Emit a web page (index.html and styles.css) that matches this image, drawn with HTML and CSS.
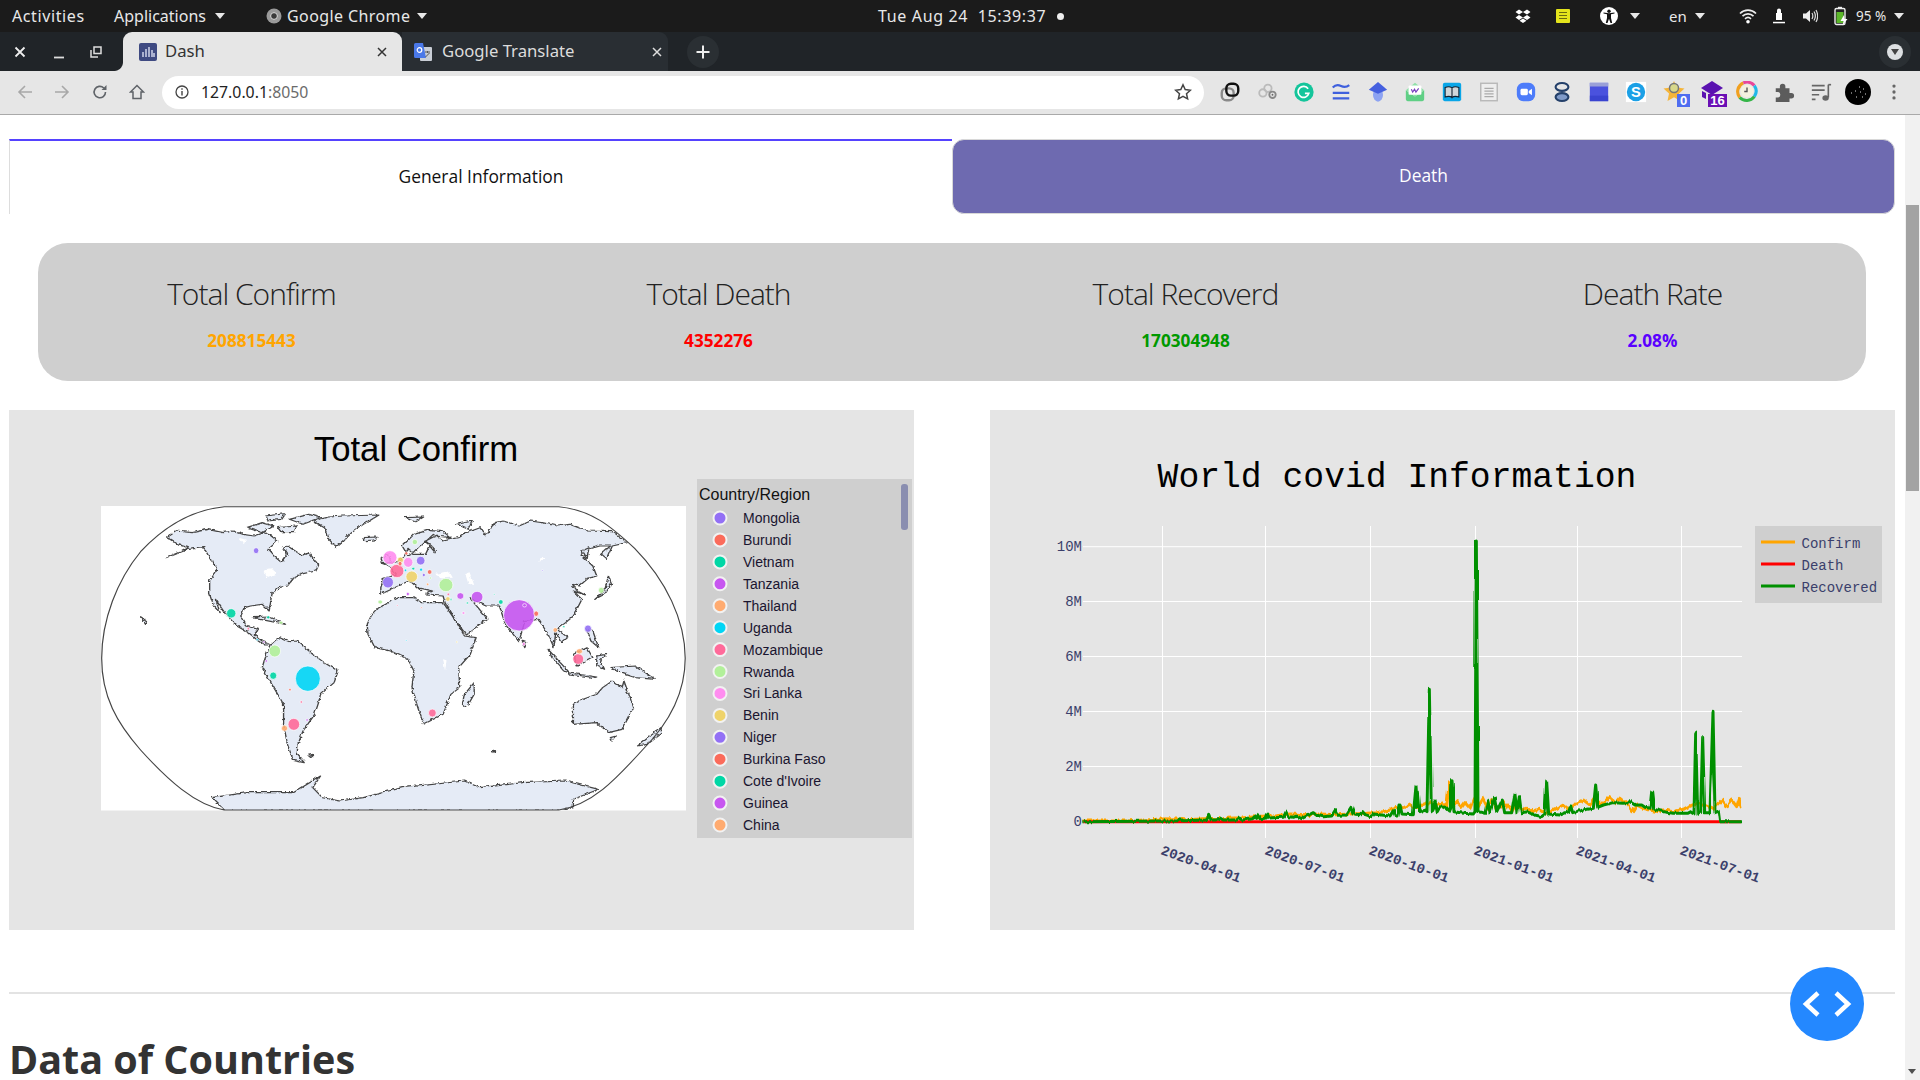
FILE: index.html
```html
<!DOCTYPE html>
<html lang="en">
<head>
<meta charset="utf-8">
<title>Dash</title>
<link rel="stylesheet" href="styles.css">
</head>
<body>
<header class="topbar">
  <div class="top-left">
    <span class="menu m-act">Activities</span>
    <span class="menu m-app">Applications<i class="caret"></i></span>
    <svg class="chrome-logo" viewBox="0 0 16 16"><circle cx="8" cy="8" r="7.5" fill="#9a9a9a"/><circle cx="8" cy="8" r="3.4" fill="#3a3a3a" stroke="#ddd" stroke-width="1"/></svg>
    <span class="menu m-chr">Google Chrome<i class="caret"></i></span>
  </div>
  <div class="clock">Tue Aug 24&nbsp; 15:39:37<i class="rec-dot"></i></div>
  <div class="top-right">
    <svg class="ti w16" viewBox="0 0 16 16"><path fill="#fff" d="M4 1.5 8 4 4 6.5 0.5 4zM12 1.5 15.5 4 12 6.5 8 4zM4 7 8 9.5 4 12 .5 9.500zM12 7l3.500 2.500L12 12 8 9.500zM4.500 12.700 8 10.500l3.500 2.200L8 15z"/></svg>
    <svg class="ti w14 ml25" viewBox="0 0 14 16"><rect y="1" width="14" height="14" rx="1" fill="#e4e41c"/><path d="M3 4.500h8M3 7.500h8M3 10.500h8" stroke="#6a6a10" stroke-width="1"/></svg>
    <svg class="ti w18 ml30" viewBox="0 0 18 18"><circle cx="9" cy="9" r="9" fill="#fff"/><circle cx="9" cy="4.200" r="1.700" fill="#111"/><path d="M3.500 6.500 7 7.300v3.700L5.800 16h1.700L9 11.800 10.500 16h1.700L11 11V7.300l3.500-.8v-1l-5.500.7-5.500-.7z" fill="#111"/></svg>
    <i class="caret ml12"></i>
    <span class="lang ml29">en</span>
    <i class="caret ml6"></i>
    <svg class="ti w18 ml34" viewBox="0 0 18 16"><path d="M1 5.500C5.500 1 12.500 1 17 5.500M3.500 8.200c3-3 8-3 11 0M6 10.800c1.700-1.500 4.300-1.500 6 0" fill="none" stroke="#eee" stroke-width="1.700"/><circle cx="9" cy="13.700" r="1.800" fill="#fff"/></svg>
    <svg class="ti w12 ml16" viewBox="0 0 12 18"><path d="M4 6V3.500a2 2 0 0 1 4 0V6h1v7H3V6z" fill="#fff"/><rect x="0" y="14.800" width="12" height="1.500" fill="#fff"/></svg>
    <svg class="ti w16 ml17" viewBox="0 0 16 16"><path d="M1 5.500h3L8 2v12l-4-3.500H1z" fill="#eee"/><path d="M10 5c1 1.800 1 4.200 0 6M12 3.500c1.700 2.800 1.700 6.200 0 9M14 2c2 3.600 2 8.400 0 12" fill="none" stroke="#ddd" stroke-width="1.200"/></svg>
    <svg class="ti-batt ml16" viewBox="0 0 14 20"><rect x="1" y="2.500" width="10" height="16" rx="1.500" fill="#222" stroke="#eee" stroke-width="1.400"/><rect x="4" y="0.800" width="4" height="2" fill="#eee"/><rect x="2.500" y="6" width="7" height="11" fill="#5cb82a"/><path d="M10 9l-3.500 6h3L8.500 19.500 13.500 13h-3z" fill="#fff"/></svg>
    <span class="batt ml8">95 %</span>
    <i class="caret ml5"></i>
  </div>
</header>

<div class="tabstrip">
  <div class="winctl">
    <svg class="wc" viewBox="0 0 12 12"><path d="M1.500 1.500l9 9M10.500 1.500l-9 9" stroke="#eee" stroke-width="1.800"/></svg>
    <svg class="wc wc-min" viewBox="0 0 12 12"><path d="M1 10.500h10" stroke="#ddd" stroke-width="1.800"/></svg>
    <svg class="wc wc-res" viewBox="0 0 12 12"><path d="M4 1h7v6.500H4zM1 4v7h7" fill="none" stroke="#ddd" stroke-width="1.500"/></svg>
  </div>
  <div class="tab tab-active">
    <svg class="fav" viewBox="0 0 18 18"><rect width="18" height="18" rx="2" fill="#3f4a82"/><path d="M4 14V9M7 14V6M10 14V4M13 14V7M15 14v-4" stroke="#cfd3ea" stroke-width="1.500"/></svg>
    <span class="tab-title">Dash</span>
    <svg class="tabx" viewBox="0 0 10 10"><path d="M1 1l8 8M9 1 1 9" stroke="#333" stroke-width="1.500"/></svg>
  </div>
  <div class="tab tab-idle">
    <svg class="fav" viewBox="0 0 18 18"><rect x="6" y="4" width="12" height="14" rx="1" fill="#c9ced6"/><path d="M0 1.500A1.500 1.500 0 0 1 1.500 0H9l3 15H1.500A1.500 1.500 0 0 1 0 13.500z" fill="#4a78e8"/><circle cx="5.500" cy="7" r="2.300" fill="none" stroke="#fff" stroke-width="1.200"/><path d="M11 9h5M13.500 8v2M11.500 14l4-4" stroke="#555" stroke-width="1"/></svg>
    <span class="tab-title">Google Translate</span>
    <svg class="tabx" viewBox="0 0 10 10"><path d="M1 1l8 8M9 1 1 9" stroke="#ddd" stroke-width="1.500"/></svg>
  </div>
  <div class="newtab">
    <svg viewBox="0 0 14 14"><path d="M7 0.500v13M0.500 7h13" stroke="#eee" stroke-width="2"/></svg>
  </div>
  <div class="profile-drop"><i></i></div>
</div>

<div class="toolbar">
  <svg class="nav nav-a" viewBox="0 0 16 16"><path d="M15 8H2M8 2 2 8l6 6" fill="none" stroke="#a8a8a8" stroke-width="1.600"/></svg>
  <svg class="nav nav-b" viewBox="0 0 16 16"><path d="M1 8h13M8 2l6 6-6 6" fill="none" stroke="#a8a8a8" stroke-width="1.600"/></svg>
  <svg class="nav nav-c" viewBox="0 0 16 16"><path d="M13.500 8a5.700 5.700 0 1 1-1.700-4" fill="none" stroke="#5f6368" stroke-width="1.600"/><path d="M14.500 1v5h-5z" fill="#5f6368"/></svg>
  <svg class="nav nav-d" viewBox="0 0 16 16"><path d="M8 1.500 1.500 8H4v6.500h8V8h2.500z" fill="none" stroke="#5f6368" stroke-width="1.500"/></svg>
  <div class="omnibox">
    <svg class="info" viewBox="0 0 14 14"><circle cx="7" cy="7" r="6" fill="none" stroke="#444" stroke-width="1.300"/><path d="M7 6v4.500M7 3.300v1.500" stroke="#444" stroke-width="1.400"/></svg>
    <span class="url">127.0.0.1<span class="port">:8050</span></span>
    <svg class="star" viewBox="0 0 18 18"><path d="M9 1.800l2.200 4.800 5.200.6-3.900 3.500 1.100 5.200L9 13.300l-4.600 2.600 1.100-5.200L1.600 7.200l5.200-.6z" fill="none" stroke="#444" stroke-width="1.500"/></svg>
  </div>
  <div class="exts">
    <span class="ext"><svg viewBox="0 0 24 24"><rect x="3" y="8" width="13" height="13" rx="5" fill="none" stroke="#8a8a8a" stroke-width="2.600"/><rect x="8" y="3" width="13" height="13" rx="5" fill="none" stroke="#111" stroke-width="2.600"/></svg></span>
    <span class="ext"><svg viewBox="0 0 24 24"><circle cx="7.500" cy="13" r="4" fill="none" stroke="#bbb" stroke-width="2"/><circle cx="13" cy="8" r="4" fill="none" stroke="#bbb" stroke-width="2"/><circle cx="18" cy="15" r="3.500" fill="none" stroke="#888" stroke-width="2"/><circle cx="18" cy="15" r="1" fill="#666"/></svg></span>
    <span class="ext"><svg viewBox="0 0 24 24"><circle cx="12" cy="12" r="10.500" fill="#14c59b"/><path d="M16.500 8.500a6 6 0 1 0 .8 5H13" fill="none" stroke="#fff" stroke-width="1.800"/></svg></span>
    <span class="ext"><svg viewBox="0 0 24 24"><path d="M3 7c3-3 6-3 9-1.500s6 1.500 9-1M3 13h18M3 19h18" fill="none" stroke="#3e5fdd" stroke-width="2.400"/></svg></span>
    <span class="ext"><svg viewBox="0 0 24 24"><ellipse cx="12" cy="15" rx="5.500" ry="7.500" fill="#8da3f2"/><path d="M12 1 22 9.500 12 14 2 9.500z" fill="#4560df"/></svg></span>
    <span class="ext"><svg viewBox="0 0 24 24"><path d="M2 10v10a2 2 0 0 0 2 2h16a2 2 0 0 0 2-2V10l-10 7z" fill="#5fcf85"/><path d="M2 10 12 2l10 8-10 7z" fill="#8fe0a8"/><rect x="5" y="5" width="14" height="10" rx="1" fill="#fff"/><path d="M8 9l1.500 3 2-3 1.500 3 3-4" fill="none" stroke="#7a3fc0" stroke-width="1.300"/></svg></span>
    <span class="ext"><svg viewBox="0 0 24 24"><rect x="2" y="2" width="20" height="20" rx="2" fill="#09a6e8"/><path d="M4.500 7c3-1 5.500-1 7.500.500v10.500c-2-1.500-4.500-1.500-7.500-.5zM19.500 7c-3-1-5.500-1-7.500.500v10.500c2-1.500 4.500-1.500 7.500-.5z" fill="#cfd6da" stroke="#123" stroke-width="1.200"/></svg></span>
    <span class="ext"><svg viewBox="0 0 24 24"><rect x="3" y="2.500" width="18" height="19" fill="#eee" stroke="#b9b9b9" stroke-width="1.600"/><path d="M7 8h10M7 11h10M7 14h10M7 17h10" stroke="#aaa" stroke-width="1.300"/></svg></span>
    <span class="ext"><svg viewBox="0 0 24 24"><rect x="2" y="2" width="20" height="20" rx="7" fill="#4d7cfa"/><rect x="6" y="8.500" width="8" height="7" rx="1.500" fill="#fff"/><path d="M15 11l3.500-2.500v7L15 13z" fill="#fff"/></svg></span>
    <span class="ext"><svg viewBox="0 0 24 24"><ellipse cx="12" cy="6.500" rx="7" ry="4.300" fill="none" stroke="#24406a" stroke-width="2.300"/><ellipse cx="12" cy="17.500" rx="7" ry="4.300" fill="#7f9ac8" stroke="#24406a" stroke-width="2.300"/></svg></span>
    <span class="ext"><svg viewBox="0 0 24 24"><rect x="2" y="2" width="20" height="20" fill="#4a52de"/><rect x="2" y="2" width="20" height="4" fill="#9aa0d8"/><rect x="2" y="16" width="20" height="6" fill="#3a44d0"/></svg></span>
    <span class="ext"><svg viewBox="0 0 24 24"><rect x="1" y="1" width="22" height="22" fill="#fff"/><circle cx="12" cy="12" r="10" fill="#1ba0e6"/><text class="skype-s" x="12" y="17.500" text-anchor="middle">S</text></svg></span>
    <span class="ext"><svg class="badged" viewBox="0 0 28 28"><path d="M11 2l3 6.500 7.500.9-5.500 5 1.500 7.500L11 18.200 4.500 22 6 14.400.5 9.400 8 8.500z" fill="#f5b53a"/><circle cx="11" cy="9" r="4.500" fill="#d8d88a" stroke="#777" stroke-width="1.500"/><rect x="14" y="15" width="13" height="13" fill="#4f6df0"/><text class="badge" x="20.500" y="26" text-anchor="middle">0</text></svg></span>
    <span class="ext"><svg class="badged" viewBox="0 0 28 28"><path d="M12 2 23 9 12 16 1 9z" fill="#5a12b0"/><path d="M2 12l4 2v6l-4-2z" fill="#5a12b0"/><rect x="8" y="15" width="19" height="13" fill="#6a0fb5"/><text class="badge" x="17.500" y="26" text-anchor="middle">16</text></svg></span>
    <span class="ext"><svg viewBox="0 0 24 24"><path d="M8 2A10.500 10.500 0 0 0 4 18" fill="none" stroke="#f0a020" stroke-width="3.400"/><path d="M8 2A10.500 10.500 0 0 1 20 5" fill="none" stroke="#e8479a" stroke-width="3.400"/><path d="M20 5a10.500 10.500 0 0 1 0 12" fill="none" stroke="#20b8e8" stroke-width="3.400"/><path d="M20 17a10.500 10.500 0 0 1-16 1" fill="none" stroke="#35b548" stroke-width="3.400"/><circle cx="12" cy="11" r="7" fill="#f4f1df"/><path d="M12 7v4.500H9" fill="none" stroke="#555" stroke-width="1.500"/></svg></span>
    <span class="ext"><svg viewBox="0 0 24 24"><path d="M3 8h4.500V6a3 3 0 0 1 6 0v2H18v5h2a3 3 0 0 1 0 6h-2v4H3v-5h2a3 3 0 0 0 0-6H3z" fill="#5c5c5c"/></svg></span>
    <span class="ext"><svg viewBox="0 0 24 24"><path d="M2 5h14M2 10h14M2 15h8M2 20h4" stroke="#666" stroke-width="1.800"/><path d="M20 4v14" stroke="#666" stroke-width="1.800"/><ellipse cx="17" cy="18.500" rx="3.500" ry="3" fill="#666"/><path d="M20 4h3" stroke="#666" stroke-width="1.800"/></svg></span>
    <span class="ext"><svg class="avatar" viewBox="0 0 26 26"><circle cx="13" cy="13" r="13" fill="#000"/><path d="M6 14h1M10 12h1M14 8h1M15 13h1M18 10h1M20 15h1M11 18h1M17 18h1" stroke="#ddd" stroke-width="1"/></svg></span>
    <span class="ext"><svg viewBox="0 0 24 24"><circle cx="12" cy="5.500" r="1.800" fill="#666"/><circle cx="12" cy="12" r="1.800" fill="#666"/><circle cx="12" cy="18.500" r="1.800" fill="#666"/></svg></span>
  </div>
</div>

<div class="viewport">
  <main class="page">
    <nav class="tabs">
      <div class="dash-tab dash-tab-on">General Information</div>
      <div class="dash-tab dash-tab-off">Death</div>
    </nav>

    <section class="stats">
      <div class="stat"><h2 class="stat-name">Total Confirm</h2><p class="stat-num n-confirm">208815443</p></div>
      <div class="stat"><h2 class="stat-name">Total Death</h2><p class="stat-num n-death">4352276</p></div>
      <div class="stat"><h2 class="stat-name">Total Recoverd</h2><p class="stat-num n-rec">170304948</p></div>
      <div class="stat"><h2 class="stat-name">Death Rate</h2><p class="stat-num n-rate">2.08%</p></div>
    </section>

    <section class="graphs">
      <div class="panel">
        <svg class="plot" viewBox="9 410 905 520">
          <defs>
            <filter id="coast" x="0" y="0" width="100%" height="100%" filterUnits="objectBoundingBox" color-interpolation-filters="sRGB">
              <feTurbulence type="turbulence" baseFrequency=".07" numOctaves="2" seed="7" result="n"/>
              <feDisplacementMap in="SourceGraphic" in2="n" scale="9" xChannelSelector="R" yChannelSelector="G"/>
            </filter>
            <filter id="wiggle" x="-2%" y="-2%" width="104%" height="104%" color-interpolation-filters="sRGB">
              <feTurbulence type="fractalNoise" baseFrequency=".09 .01" numOctaves="2" seed="3" result="n"/>
              <feDisplacementMap in="SourceGraphic" in2="n" scale="16" xChannelSelector="A" yChannelSelector="R"/>
            </filter>
            <filter id="jitter" x="-2%" y="-2%" width="104%" height="104%" color-interpolation-filters="sRGB">
              <feTurbulence type="fractalNoise" baseFrequency=".14 .004" numOctaves="2" seed="11" result="n"/>
              <feDisplacementMap in="SourceGraphic" in2="n" scale="9" xChannelSelector="A" yChannelSelector="R"/>
            </filter>
          </defs>
          <text class="map-title" x="416" y="461" text-anchor="middle">Total Confirm</text>
          <rect x="101" y="506" width="585" height="304.500" fill="#fff"/>
          <g transform="translate(90 490) scale(.38903 .33333)">
            <g class="land" filter="url(#coast)">
              <path d="M195,200 L232,182 250,170 222,160 195,140 220,120 260,125 300,115 340,125 365,120 390,130 420,135 445,125 460,132 480,150 455,175 470,195 490,215 505,190 495,172 505,165 545,195 560,185 585,222 578,240 545,248 520,262 505,285 485,290 465,310 458,360 440,340 410,345 395,350 385,375 400,405 430,415 420,430 440,450 462,462 445,462 430,450 405,425 375,405 345,368 320,325 332,365 315,345 305,310 305,270 325,235 305,200 290,170 250,175Z"/>
              <path d="M570,90 L610,78 650,75 740,72 715,90 700,100 670,125 650,150 630,170 612,145 605,120 600,110Z"/>
              <path d="M445,510 L460,465 485,440 510,452 530,450 570,490 600,515 635,540 625,575 590,610 585,635 575,670 545,720 532,760 530,790 548,815 520,808 505,760 495,700 495,640 470,590 440,530Z"/>
              <path d="M710,400 L720,375 740,350 790,320 830,320 850,335 870,335 905,335 920,360 935,385 960,435 990,440 975,490 945,530 948,590 925,610 905,670 855,700 840,650 825,590 830,540 815,505 770,480 730,470 712,430Z"/>
              <path d="M745,290 L752,262 785,252 772,232 752,218 790,215 805,195 815,175 830,190 860,190 870,165 885,185 880,170 860,150 885,135 925,140 905,122 865,118 830,130 800,165 815,195 830,185 880,130 905,150 945,140 965,125 1000,110 1015,135 1040,95 1060,90 1100,105 1130,90 1160,95 1200,105 1230,100 1275,120 1340,122 1378,155 1340,165 1325,205 1310,190 1335,165 1308,165 1268,178 1262,195 1290,225 1300,255 1278,262 1255,285 1238,280 1250,300 1270,312 1240,300 1262,325 1240,375 1220,395 1198,415 1225,440 1210,455 1195,425 1190,470 1175,430 1150,385 1115,392 1100,452 1065,400 1050,345 1015,345 975,322 1020,385 965,432 935,385 910,335 905,315 860,312 878,300 840,290 850,300 820,270 790,285 745,310Z"/>
              <path d="M1240,640 L1265,625 1300,610 1315,590 1340,570 1365,590 1370,570 1395,650 1365,715 1330,725 1300,695 1240,700Z"/>
              <path d="M1335,530 L1400,525 1450,565 1400,560 1360,545Z"/>
              <path d="M1240,490 L1275,470 1290,500 1250,525Z"/>
              <path d="M1175,475 L1230,545 1215,540 1185,500Z"/>
              <path d="M1225,545 L1300,558 1290,562 1230,552Z"/>
              <path d="M1300,495 L1325,490 1310,510 1320,535 1300,525Z"/>
              <path d="M1275,420 L1290,420 1305,470 1285,450Z"/>
              <path d="M1295,325 L1320,300 1330,255 1338,280 1320,310Z"/>
              <path d="M1262,180 L1280,170 1275,205Z"/>
              <path d="M960,610 L985,575 985,610 965,650 955,640Z"/>
              <path d="M1405,765 L1465,710 1470,725 1430,760Z"/>
              <path d="M1335,740 L1350,735 1340,750Z"/>
              <path d="M745,205 L765,190 770,215 750,218Z"/>
              <path d="M700,140 L735,138 730,150 705,152Z"/>
              <path d="M415,380 L460,378 500,400 465,392Z"/>
              <path d="M1108,450 L1120,455 1115,470Z"/>
              <path d="M310,920 L400,905 520,905 590,855 570,890 595,920 640,930 700,920 800,890 960,870 1000,890 1110,875 1220,870 1305,895 1240,925 1240,950 1205,960 H345Z"/>
              <path d="M400,110 L440,95 470,105 440,125Z"/>
              <path d="M510,85 L560,70 590,80 545,100Z"/>
              <path d="M450,75 L500,68 490,85 455,90Z"/>
              <path d="M480,110 L530,105 520,125 490,125Z"/>
              <path d="M810,80 L855,78 835,92Z"/>
              <path d="M940,100 L980,90 970,115Z"/>
              <path d="M130,380 L146,392 140,400Z"/>
              <path d="M560,795 L572,793 565,800Z"/>
              <path d="M1030,782 L1040,780 1035,788Z"/>
            </g>
            <g class="lakes" filter="url(#coast)">
              <path d="M885,252 L922,244 930,260 900,262Z"/>
              <path d="M962,248 L973,244 985,282 970,278Z"/>
              <path d="M445,238 L468,235 476,252 452,262Z"/>
              <path d="M380,140 L398,146 393,160Z"/>
              <path d="M905,505 L914,508 910,540Z"/>
              <path d="M1160,198 L1168,205 1152,212Z"/>
            </g>
            <path class="globe" d="M345,50 H1205 C1290,60 1340,110 1400,175 C1480,270 1530,390 1530,505 C1530,620 1480,710 1420,780 C1350,870 1290,945 1205,960 H345 C270,945 200,870 130,780 C70,700 30,620 30,505 C30,390 70,270 130,185 C190,110 260,60 345,50Z"/>
            <g class="bubbles">
              <ellipse class="c6" cx="560" cy="566" rx="32" ry="38"/><ellipse class="c4" cx="1103" cy="376" rx="40" ry="47"/><ellipse class="c8" cx="915" cy="285" rx="18" ry="20"/><ellipse class="c4" cx="995" cy="321" rx="15" ry="17"/><ellipse class="c4" cx="952" cy="318" rx="9" ry="10"/><ellipse class="c3" cx="363" cy="370" rx="12" ry="14"/><ellipse class="c1" cx="427" cy="182" rx="7" ry="9"/><ellipse class="c8" cx="475" cy="483" rx="15" ry="18"/><ellipse class="c3" cx="471" cy="557" rx="9" ry="11"/><ellipse class="c7" cx="524" cy="703" rx="15" ry="18"/><ellipse class="c5" cx="500" cy="715" rx="8" ry="9"/><ellipse class="c7" cx="880" cy="669" rx="10" ry="12"/><ellipse class="c7" cx="1255" cy="507" rx="14" ry="16"/><ellipse class="c5" cx="1258" cy="484" rx="8" ry="8"/><ellipse class="c1" cx="1280" cy="416" rx="9" ry="11"/><ellipse class="c5" cx="1196" cy="420" rx="6" ry="7"/><ellipse class="c2" cx="1147" cy="371" rx="6" ry="8"/><ellipse class="c3" cx="1056" cy="336" rx="6" ry="7"/><ellipse class="c9" cx="771" cy="203" rx="18" ry="21"/><ellipse class="c7" cx="789" cy="243" rx="18" ry="20"/><ellipse class="c9" cx="818" cy="217" rx="12" ry="15"/><ellipse class="c1" cx="850" cy="212" rx="11" ry="13"/><ellipse class="c10" cx="827" cy="260" rx="15" ry="17"/><ellipse class="c1" cx="766" cy="277" rx="14" ry="17"/><ellipse class="c10" cx="798" cy="210" rx="8" ry="9"/><ellipse class="c2" cx="797" cy="221" rx="5" ry="7"/><ellipse class="c2" cx="873" cy="246" rx="6" ry="7"/><ellipse class="c6" cx="851" cy="239" rx="4" ry="5"/><ellipse class="c3" cx="831" cy="236" rx="4" ry="4"/><ellipse class="c6" cx="811" cy="241" rx="3" ry="4"/><ellipse class="c1" cx="858" cy="255" rx="4" ry="5"/><ellipse class="c8" cx="875" cy="264" rx="3" ry="3"/><ellipse class="c8" cx="835" cy="156" rx="7" ry="8"/><ellipse class="c2" cx="813" cy="190" rx="4" ry="5"/><ellipse class="c8" cx="746" cy="336" rx="6" ry="6"/><ellipse class="c10" cx="920" cy="327" rx="6" ry="7"/><ellipse class="c7" cx="921" cy="313" rx="3" ry="4"/><ellipse class="c3" cx="928" cy="328" rx="2" ry="5"/><ellipse class="c4" cx="817" cy="312" rx="4" ry="5"/><ellipse class="c5" cx="868" cy="283" rx="3" ry="4"/><ellipse class="c8" cx="1314" cy="301" rx="7" ry="9"/><ellipse class="c9" cx="1115" cy="462" rx="4" ry="5"/><ellipse class="c4" cx="1117" cy="346" rx="5" ry="5"/><ellipse class="c3" cx="1218" cy="410" rx="3" ry="3"/><ellipse class="c3" cx="458" cy="382" rx="4" ry="5"/><ellipse class="c8" cx="491" cy="398" rx="5" ry="5"/><ellipse class="c7" cx="407" cy="416" rx="3" ry="4"/><ellipse class="c6" cx="430" cy="449" rx="3" ry="3"/><ellipse class="c4" cx="447" cy="456" rx="3" ry="3"/><ellipse class="c4" cx="453" cy="513" rx="3" ry="4"/><ellipse class="c2" cx="514" cy="599" rx="3" ry="4"/><ellipse class="c7" cx="543" cy="636" rx="3" ry="4"/><ellipse class="c4" cx="558" cy="690" rx="3" ry="4"/><ellipse class="c3" cx="970" cy="339" rx="3" ry="3"/><ellipse class="c9" cx="960" cy="369" rx="4" ry="4"/><ellipse class="c10" cx="943" cy="456" rx="2" ry="3"/><ellipse class="c6" cx="813" cy="451" rx="2" ry="2"/><ellipse class="c2" cx="852" cy="353" rx="2" ry="2"/><ellipse class="c7" cx="790" cy="346" rx="2" ry="2"/><ellipse class="c1" cx="1163" cy="241" rx="2" ry="2"/><ellipse class="c3" cx="1039" cy="313" rx="2" ry="2"/>
            </g>
          </g>
          <rect class="leg-bg" x="697" y="479" width="215" height="359"/>
          <rect class="leg-thumb" x="901" y="484" width="7" height="46" rx="3"/>
          <text class="leg-title" x="699" y="500">Country/Region</text>
          <g class="leg-items">
            <circle class="c1" cx="720" cy="518" r="6.500"/><text x="743" y="523">Mongolia</text>
            <circle class="c2" cx="720" cy="539.900" r="6.500"/><text x="743" y="544.900">Burundi</text>
            <circle class="c3" cx="720" cy="561.900" r="6.500"/><text x="743" y="566.900">Vietnam</text>
            <circle class="c4" cx="720" cy="583.800" r="6.500"/><text x="743" y="588.800">Tanzania</text>
            <circle class="c5" cx="720" cy="605.700" r="6.500"/><text x="743" y="610.700">Thailand</text>
            <circle class="c6" cx="720" cy="627.700" r="6.500"/><text x="743" y="632.700">Uganda</text>
            <circle class="c7" cx="720" cy="649.600" r="6.500"/><text x="743" y="654.600">Mozambique</text>
            <circle class="c8" cx="720" cy="671.500" r="6.500"/><text x="743" y="676.500">Rwanda</text>
            <circle class="c9" cx="720" cy="693.400" r="6.500"/><text x="743" y="698.400">Sri Lanka</text>
            <circle class="c10" cx="720" cy="715.400" r="6.500"/><text x="743" y="720.400">Benin</text>
            <circle class="c1" cx="720" cy="737.300" r="6.500"/><text x="743" y="742.300">Niger</text>
            <circle class="c2" cx="720" cy="759.200" r="6.500"/><text x="743" y="764.200">Burkina Faso</text>
            <circle class="c3" cx="720" cy="781.200" r="6.500"/><text x="743" y="786.200">Cote d'Ivoire</text>
            <circle class="c4" cx="720" cy="803.100" r="6.500"/><text x="743" y="808.100">Guinea</text>
            <circle class="c5" cx="720" cy="825" r="6.500"/><text x="743" y="830">China</text>
          </g>
        </svg>
      </div>
      <div class="panel">
        <svg class="plot" viewBox="990 410 905 520">
          <text class="chart-title" x="1397" y="487" text-anchor="middle">World covid Information</text>
          <g class="grid">
            <path d="M1083 546.700H1742M1083 601.500H1742M1083 656.500H1742M1083 711.500H1742M1083 766.500H1742M1083 821.500H1742"/>
            <path d="M1162.500 526V838M1265.500 526V838M1370.500 526V838M1475.500 526V838M1577.500 526V838M1681.500 526V838"/>
          </g>
          <g class="ticks" text-anchor="end">
            <text x="1082" y="551">10M</text><text x="1082" y="606">8M</text><text x="1082" y="661">6M</text><text x="1082" y="716">4M</text><text x="1082" y="771">2M</text><text x="1082" y="826">0</text>
          </g>
          <g class="ticks ticks-x">
            <text x="1160" y="854" transform="rotate(20 1160 854)">2020-04-01</text>
            <text x="1264" y="854" transform="rotate(20 1264 854)">2020-07-01</text>
            <text x="1368" y="854" transform="rotate(20 1368 854)">2020-10-01</text>
            <text x="1473" y="854" transform="rotate(20 1473 854)">2021-01-01</text>
            <text x="1575" y="854" transform="rotate(20 1575 854)">2021-04-01</text>
            <text x="1679" y="854" transform="rotate(20 1679 854)">2021-07-01</text>
          </g>
          <g transform="translate(1030 510) scale(.33333)">
            <polyline class="line l-confirm" filter="url(#wiggle)" points="160,933 300,932 360,929 397,927 430,926 470,930 520,926 590,925 640,923 680,920 706,918 740,917 780,912 830,914 870,912 920,914 960,912 1010,910 1040,908 1070,903 1090,897 1110,888 1125,892 1140,884 1150,892 1165,890 1180,885 1200,878 1215,890 1235,878 1250,892 1258,815 1266,890 1280,875 1295,892 1305,878 1320,895 1330,870 1340,890 1356,863 1372,895 1385,870 1400,900 1420,875 1435,890 1445,905 1460,880 1475,900 1490,895 1510,905 1525,898 1545,910 1560,905 1580,895 1600,885 1615,897 1635,880 1660,870 1680,885 1695,865 1715,885 1735,860 1755,878 1770,862 1790,880 1808,905 1820,885 1840,895 1860,900 1880,905 1900,900 1930,905 1960,898 1975,890 2000,880 2030,885 2050,895 2075,870 2090,890 2105,870 2120,890 2128,865 2133,895"/>
            <polyline class="line l-death" points="160,935 2133,935"/>
            <polyline class="line l-rec" filter="url(#jitter)" points="160,935 330,934 440,932 450,926 460,932 530,930 536,913 543,930 560,930 570,924 580,930 620,930 628,924 636,930 668,926 674,920 680,928 686,915 692,926 705,925 710,912 716,924 760,922 768,906 775,920 790,922 800,918 815,926 830,918 850,908 860,916 880,920 905,918 915,902 922,916 950,915 965,892 972,912 990,914 998,905 1006,914 1024,920 1030,912 1080,918 1090,902 1096,918 1104,918 1110,885 1116,912 1150,914 1158,828 1162,890 1165,848 1170,905 1185,900 1191,905 1198,538 1204,905 1210,895 1215,870 1222,905 1230,890 1245,892 1258,905 1262,895 1266,812 1272,905 1300,910 1330,912 1335,905 1339,93 1344,905 1365,910 1373,870 1380,908 1393,865 1400,905 1417,870 1424,908 1445,908 1455,853 1461,908 1468,860 1474,908 1490,905 1515,915 1535,920 1545,912 1550,815 1556,912 1590,915 1616,905 1622,888 1628,908 1660,900 1690,895 1697,825 1703,892 1720,885 1750,878 1780,880 1800,875 1815,885 1835,885 1845,892 1860,895 1865,845 1871,898 1900,905 1930,910 1970,910 1980,905 1992,912 1997,668 2003,910 2012,905 2018,682 2024,908 2040,908 2049,604 2055,908 2068,903 2072,935 2133,935"/>
          </g>
          <rect class="leg-bg" x="1755" y="526" width="127" height="77"/>
          <path class="key l-confirm" d="M1761 542H1795"/>
          <path class="key l-death" d="M1761 564H1795"/>
          <path class="key l-rec" d="M1761 586H1795"/>
          <g class="ticks">
            <text x="1801.500" y="548">Confirm</text><text x="1801.500" y="570">Death</text><text x="1801.500" y="592">Recovered</text>
          </g>
        </svg>
      </div>
    </section>

    <hr class="rule">
    <h1 class="section-title">Data of Countries</h1>
  </main>
  <div class="scrollbar"><div class="thumb"></div><i class="sb-down"></i></div>
  <button class="fab" type="button" aria-label="Code">
    <svg viewBox="0 0 50 30"><path d="M16 4 4 15l12 11M34 4l12 11-12 11" fill="none" stroke="#fff" stroke-width="4.500"/></svg>
  </button>
</div>
</body>
</html>
```
FILE: styles.css
```css
* { box-sizing: border-box; }
html, body { margin: 0; height: 1080px; overflow: hidden; background: #fff; }
body { display: flex; flex-direction: column; font-family: "Open Sans", sans-serif; }

/* GNOME top bar */
.topbar { height: 32px; flex: none; display: flex; align-items: center; background: #1b1b1b; color: #e8e8e8; font: 16px "Noto Sans", sans-serif; padding-right: 16px; }
.top-left { width: 878px; flex: none; display: flex; align-items: center; padding-left: 12px; }
.menu { display: inline-flex; align-items: center; white-space: nowrap; flex: none; }
.m-act { width: 102px; letter-spacing: .6px; }
.m-app { width: 152px; }
.m-app .caret { margin-left: 9px; }
.m-chr { letter-spacing: .4px; }
.chrome-logo { width: 16px; height: 16px; margin-right: 5px; flex: none; }
.caret { display: inline-block; width: 0; height: 0; border-left: 5.5px solid transparent; border-right: 5.5px solid transparent; border-top: 6px solid #e8e8e8; }
.menu .caret { margin-left: 7px; }
.menu.m-app .caret { margin-left: 9px; }
.clock { display: flex; align-items: center; white-space: nowrap; letter-spacing: .65px; }
.rec-dot { width: 7px; height: 7px; border-radius: 50%; background: #eee; margin-left: 11px; }
.top-right { margin-left: auto; display: flex; align-items: center; }
.ti { display: block; height: 18px; }
.ti-batt { display: block; width: 14px; height: 20px; }
.w12 { width: 12px; } .w14 { width: 14px; } .w16 { width: 16px; } .w18 { width: 18px; }
.ml5 { margin-left: 5px; } .ml6 { margin-left: 6px; } .ml8 { margin-left: 8px; } .ml12 { margin-left: 12px; }
.ml16 { margin-left: 16px; } .ml17 { margin-left: 17px; } .ml25 { margin-left: 25px; } .ml29 { margin-left: 29px; }
.ml30 { margin-left: 30px; } .ml34 { margin-left: 34px; }
.lang { width: 20px; font-size: 15px; }
.batt { width: 33px; font-size: 13.5px; white-space: nowrap; letter-spacing: 0; }

/* Chrome tab strip */
.tabstrip { height: 39px; flex: none; display: flex; align-items: stretch; background: #202428; }
.winctl { width: 123px; flex: none; display: flex; align-items: center; padding-left: 14px; }
.wc { width: 12px; height: 12px; display: block; }
.wc-min { margin-left: 27px; margin-top: 3px; }
.wc-res { margin-left: 25px; }
.tab { display: flex; align-items: center; font: 16.700px "Noto Sans", sans-serif; position: relative; }
.tab-title { flex: 1; white-space: nowrap; padding-bottom: 3px; }
.tab-active { width: 279px; background: #e6e6e6; color: #333; border-radius: 9px 9px 0 0; padding: 0 14px 0 16px; }
.tab-active::before, .tab-active::after { content: ""; position: absolute; bottom: 0; width: 9px; height: 9px; }
.tab-active::before { left: -9px; background: radial-gradient(circle at 0 0, #202428 8.500px, #e6e6e6 9.500px); }
.tab-active::after { right: -9px; background: radial-gradient(circle at 100% 0, #292e33 8.500px, #e6e6e6 9.500px); }
.tab-idle { width: 266px; background: #292e33; color: #dcdcdc; border-radius: 0 9px 0 0; padding: 0 5px 0 12px; }
.fav { width: 18px; height: 18px; flex: none; margin-right: 10px; }
.tab-active .fav { margin-right: 8px; }
.tabx { width: 10px; height: 10px; flex: none; margin-right: 1px; }
.newtab { width: 32px; height: 32px; margin: 4px 0 0 19px; border-radius: 50%; background: #2a2f33; display: flex; align-items: center; justify-content: center; }
.newtab svg { width: 14px; height: 14px; }
.profile-drop { width: 32px; height: 32px; margin: 4px 9px 0 auto; border-radius: 50%; background: #2a2f33; display: flex; align-items: center; justify-content: center; }
.profile-drop i { width: 16px; height: 16px; border-radius: 50%; background: #dde0e2; position: relative; }
.profile-drop i::after { content: ""; position: absolute; left: 3.500px; top: 5px; border-left: 4.500px solid transparent; border-right: 4.500px solid transparent; border-top: 6.500px solid #444; }

/* Chrome toolbar */
.toolbar { height: 44px; flex: none; display: flex; align-items: center; background: #e6e6e6; border-bottom: 1px solid #a9a9a9; padding: 0 0 1px 17px; }
.nav { width: 16px; height: 16px; flex: none; }
.nav-b { margin-left: 21px; }
.nav-c { margin-left: 22px; }
.nav-d { margin-left: 21px; }
.omnibox { width: 1042px; height: 33px; margin-left: 17px; flex: none; background: #fff; border-radius: 17px; display: flex; align-items: center; padding: 0 12px 0 13px; }
.info { width: 14px; height: 14px; flex: none; }
.url { margin-left: 12px; flex: 1; font: 15.800px "Noto Sans", sans-serif; color: #222; }
.port { color: #6b6b6b; }
.star { width: 18px; height: 18px; flex: none; }
.exts { display: flex; margin-left: 8px; align-items: center; }
.ext { width: 36.900px; height: 30px; flex: none; display: flex; align-items: center; justify-content: center; }
.ext svg { width: 22px; height: 22px; display: block; flex: none; }
.ext svg.avatar { width: 26px; height: 26px; }
.ext svg.badged { width: 28px; height: 28px; margin: 2px 0 0 8px; }
.skype-s { font: bold 16px "Liberation Sans", sans-serif; fill: #fff; }
.badge { font: bold 13px "Liberation Sans", sans-serif; fill: #fff; }

/* Page */
.viewport { flex: 1; min-height: 0; display: flex; position: relative; overflow: hidden; }
.page { flex: 1; min-width: 0; padding: 24px 10px 0 9px; color: #333; }
.scrollbar { width: 15px; flex: none; background: #f1f1f1; padding: 90px 1px 0; position: relative; }
.thumb { height: 286px; background: #a3a3a3; }
.sb-down { position: absolute; left: 3px; bottom: 6px; border-left: 4.500px solid transparent; border-right: 4.500px solid transparent; border-top: 5px solid #505050; }

.tabs { display: grid; grid-template-columns: 943px 943px; height: 75px; }
.dash-tab { display: flex; align-items: center; justify-content: center; font-size: 17.400px; padding-bottom: 4px; }
.dash-tab-on { color: #111; background: #fff; border-top: 2px solid #5542ff; border-left: 1px solid #ddd; }
.dash-tab-off { color: #fff; background: #6e6ab0; border: 1px solid #d8d8d8; border-radius: 12px; }

.stats { margin: 29px 29px 0; height: 137.500px; background: #cfcfcf; border-radius: 30px; display: grid; grid-template-columns: repeat(4, 467px); justify-content: center; }
.stat { text-align: center; padding-top: 30px; }
.stat-name { margin: 0; font-size: 30px; font-weight: 300; line-height: 42px; color: #222; letter-spacing: -1px; }
.stat-num { margin: 14px 0 0; font-size: 17.200px; font-weight: 700; line-height: 24px; }
.n-confirm { color: #ffa500; } .n-death { color: #ff0000; } .n-rec { color: #009900; } .n-rate { color: #5a00ff; }

.graphs { display: grid; grid-template-columns: 905px 905px; justify-content: space-between; margin-top: 29.500px; }
.panel { height: 520px; background: #e5e5e5; }
.plot { display: block; width: 905px; height: 520px; }

.map-title { font: 34.700px "Liberation Sans", sans-serif; fill: #000; }
.land path { fill: #e5ebf6; stroke: #444; stroke-width: 3.500; stroke-linejoin: round; }
.lakes path { fill: #fff; stroke: none; }
.globe { fill: none; stroke: #444; stroke-width: 3; }
.bubbles ellipse { stroke: #fff; stroke-width: 2; opacity: .9; }
.leg-bg { fill: #cfcfcf; }
.leg-thumb { fill: #8a8eb0; }
.leg-title { font: 16px "Liberation Sans", sans-serif; fill: #111; }
.leg-items text { font: 14px "Liberation Sans", sans-serif; fill: #1a1530; }
.leg-items circle { stroke: #f2f2f2; stroke-width: 2; }
.c1 { fill: #9370f5; } .c2 { fill: #fb6b5b; } .c3 { fill: #00d7a5; } .c4 { fill: #c756f0; } .c5 { fill: #ffab70; }
.c6 { fill: #00d5f5; } .c7 { fill: #ff6a9a; } .c8 { fill: #b2f09a; } .c9 { fill: #ff8df0; } .c10 { fill: #efd36a; }

.chart-title { font: 34.700px "Liberation Mono", monospace; fill: #000; }
.grid path { fill: none; stroke: #fff; stroke-width: 1; }
.ticks text { font: 14px "Liberation Mono", monospace; fill: #3b3f6b; }
.ticks-x text { font-weight: 700; }
.line { fill: none; stroke-width: 9; stroke-linejoin: round; }
.key { fill: none; stroke-width: 2.800; }
.l-confirm { stroke: #ffa500; }
.l-death { stroke: #ff0000; }
.l-rec { stroke: #009000; }

.rule { border: 0; border-top: 2px solid #e3e3e3; margin: 61.500px 0 0; }
.section-title { margin: 47.500px 0 0; font-size: 39.500px; line-height: 36px; font-weight: 700; color: #333; white-space: nowrap; }

.fab { position: absolute; left: 1790px; top: 852px; width: 74px; height: 74px; padding: 0; border: 0; border-radius: 50%; background: #2488ff; display: flex; align-items: center; justify-content: center; }
.fab svg { width: 50px; height: 30px; }
```
